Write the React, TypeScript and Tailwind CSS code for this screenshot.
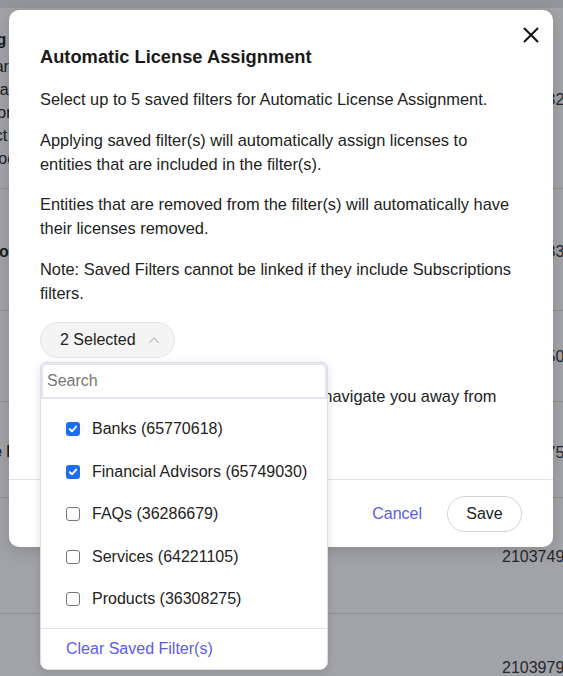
import React from 'react';

interface FilterOption {
  label: string;
  checked: boolean;
}

const filters: FilterOption[] = [
  { label: 'Banks (65770618)', checked: true },
  { label: 'Financial Advisors (65749030)', checked: true },
  { label: 'FAQs (36286679)', checked: false },
  { label: 'Services (64221105)', checked: false },
  { label: 'Products (36308275)', checked: false },
];

const rows = [
  { h: 'h-[181px]', lines: ['Pricing', 'Compare plans', 'Offers and rates', 'Docs for teams', 'Contact sales', 'Help docs'], bold: true, pt: 'pt-[20px]', num: '2103732', numTop: 'pt-[80px]' },
  { h: 'h-[122px]', lines: ['Locations'], bold: true, pt: 'pt-[51px]', num: '2103733', numTop: 'pt-[51px]' },
  { h: 'h-[91px]', lines: [], bold: false, pt: 'pt-[20px]', num: '2103750', numTop: 'pt-[34px]' },
  { h: 'h-[96px]', lines: ['Online Banking'], bold: true, pt: 'pt-[38px]', num: '2103775', numTop: 'pt-[39px]' },
  { h: 'h-[116px]', lines: [], bold: false, pt: 'pt-[20px]', num: '2103749', numTop: 'pt-[47px]' },
  { h: 'h-[120px]', lines: [], bold: false, pt: 'pt-[20px]', num: '2103979', numTop: 'pt-[42px]' },
];

const CheckBox: React.FC<{ checked: boolean }> = ({ checked }) =>
  checked ? (
    <span className="flex h-[14px] w-[14px] items-center justify-center rounded-[3px] bg-[#1a6ef2]">
      <svg width="10" height="10" viewBox="0 0 10 10">
        <path d="M1.8 5.2 L4 7.3 L8.2 2.6" fill="none" stroke="white" strokeWidth="1.9" strokeLinecap="round" strokeLinejoin="round" />
      </svg>
    </span>
  ) : (
    <span className="h-[14px] w-[14px] rounded-[3px] border border-[#767676] bg-white" />
  );

export default function App() {
  return (
    <div
      className="relative h-[676px] w-[563px] overflow-hidden bg-white text-[#222]"
      style={{ fontFamily: '"Liberation Sans", Arial, sans-serif' }}
    >
      {/* page behind the overlay */}
      <div className="h-[8px] bg-[#e8e8ea]" />
      {rows.map((row, i) => (
        <div key={i} className={`flex ${row.h} border-b border-[#dcdcdc] last:border-b-0`}>
          <div className={`ml-[-48px] w-[300px] text-[16px] leading-[23px] ${row.pt}`}>
            {row.lines.map((l, j) => (
              <div key={j} className={row.bold && j === 0 ? 'mb-[4px] font-bold' : ''}>
                {l}
              </div>
            ))}
          </div>
          <div className={`ml-auto w-[61px] overflow-hidden whitespace-nowrap text-[16px] text-[#333] ${row.numTop}`}>
            {row.num}
          </div>
        </div>
      ))}

      {/* overlay */}
      <div className="absolute inset-0 bg-[rgba(20,24,32,0.4)]" />

      {/* modal */}
      <div className="absolute left-[9px] top-[10px] flex h-[537px] w-[544px] flex-col rounded-[10px] bg-white shadow-[0_4px_16px_rgba(0,0,0,0.15)]">
        <button className="absolute right-[13px] top-[16px] flex h-[18px] w-[18px] items-center justify-center">
          <svg width="16" height="16" viewBox="0 0 16 16">
            <path d="M1.5 1.5 L14.5 14.5 M14.5 1.5 L1.5 14.5" stroke="#111" strokeWidth="2" strokeLinecap="round" />
          </svg>
        </button>

        <div className="relative flex-1 px-[31px] pt-[35px] text-[16.4px] leading-[24px]">
          <h2 className="text-[18.3px] font-bold leading-[24px] text-[#1a1a1a]">Automatic License Assignment</h2>
          <p className="mt-[18px]">Select up to 5 saved filters for Automatic License Assignment.</p>
          <p className="mt-[17px]">
            Applying saved filter(s) will automatically assign licenses to entities that are included in the filter(s).
          </p>
          <p className="mt-[16px]">
            Entities that are removed from the filter(s) will automatically have their licenses removed.
          </p>
          <p className="mt-[17px]">Note: Saved Filters cannot be linked if they include Subscriptions filters.</p>

          <button className="mt-[17px] flex h-[36px] items-center gap-[12px] rounded-full border border-[#e4e4e4] bg-[#f4f4f4] pl-[19px] pr-[14px] text-[16px] text-[#222]">
            2 Selected
            <svg width="12" height="8" viewBox="0 0 12 8">
              <path d="M1.5 6.5 L6 2 L10.5 6.5" fill="none" stroke="#c4c4c4" strokeWidth="1.4" strokeLinecap="round" strokeLinejoin="round" />
            </svg>
          </button>

          <p className="mt-[26px]">
            Saving all these new changes will also navigate you away from this page.
          </p>

          {/* dropdown */}
          <div className="absolute left-[31px] top-[352px] w-[288px] rounded-b-[8px] rounded-t-[6px] border border-[#dedede] bg-white shadow-[0_2px_8px_rgba(0,0,0,0.12)]">
            <div className="h-[36px] rounded-t-[6px] border-2 border-[#e4e4f8] bg-white pl-[4px] text-[16px] leading-[32px] text-[#777]">
              Search
            </div>
            <div className="pb-[7px] pt-[9px]">
              {filters.map((f) => (
                <div key={f.label} className="flex h-[42.5px] items-center gap-[12px] pl-[25px]">
                  <CheckBox checked={f.checked} />
                  <span className="text-[16px] text-[#222]">{f.label}</span>
                </div>
              ))}
            </div>
            <div className="flex h-[41px] items-center border-t border-[#e4e4e4] pl-[25px] text-[16px] text-[#5b5bf0]">
              Clear Saved Filter(s)
            </div>
          </div>
        </div>

        <div className="flex h-[68px] items-center justify-end gap-[25px] border-t border-[#e4e4e4] pr-[31px]">
          <button className="text-[16px] text-[#5b5bf0]">Cancel</button>
          <button className="h-[36px] w-[75px] rounded-full border border-[#d4d4d4] bg-white text-[16px] text-[#222]">
            Save
          </button>
        </div>
      </div>
    </div>
  );
}
